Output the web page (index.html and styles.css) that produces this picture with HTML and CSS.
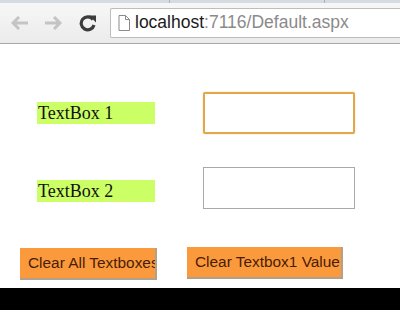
FILE: index.html
```html
<!DOCTYPE html>
<html lang="en">
<head>
  <meta charset="UTF-8">
  <title>Default.aspx</title>
  <link rel="stylesheet" href="styles.css">
</head>
<body>

  <div class="tabstrip">
    <span class="tab"></span>
    <span class="tab"></span>
  </div>

  <div class="toolbar">
    <svg class="nav-btn" width="18" height="14" viewBox="0 0 18 14">
      <path d="M8 1 L2 7 L8 13 M2 7 H17" fill="none" stroke="#c4c4c4" stroke-width="3"/>
    </svg>
    <svg class="nav-btn" width="18" height="14" viewBox="0 0 18 14">
      <path d="M10 1 L16 7 L10 13 M16 7 H1" fill="none" stroke="#c4c4c4" stroke-width="3"/>
    </svg>
    <svg class="reload" width="18" height="18" viewBox="0 0 18 18">
      <path d="M14 5.5 A6.5 6.5 0 1 0 15 11" fill="none" stroke="#3c3c3c" stroke-width="3.2"/>
      <path d="M10 1.5 L17 1.5 L17 8.5 Z" fill="#3c3c3c"/>
    </svg>
    <div class="address">
      <svg width="12" height="16" viewBox="0 0 12 16">
        <path d="M1 0.5 H7.5 L11.5 4.5 V15.5 H1 Z M7.5 0.5 V4.5 H11.5" fill="#fff" stroke="#8a8a8a" stroke-width="1"/>
      </svg>
      <span class="host">localhost</span><span class="path">:7116/Default.aspx</span>
    </div>
  </div>

  <div class="page">
    <div class="row">
      <span class="label">TextBox 1</span>
      <input type="text" class="box focused">
    </div>
    <div class="row second">
      <span class="label">TextBox 2</span>
      <input type="text" class="box">
    </div>
    <div class="buttons">
      <button class="btn btn-all">Clear All Textboxes</button>
      <button class="btn btn-one">Clear Textbox1 Value</button>
    </div>
  </div>

  <div class="bottom"></div>

</body>
</html>
```

FILE: styles.css
```css
* {
  box-sizing: border-box;
}

body {
  margin: 0;
  width: 400px;
  height: 310px;
  overflow: hidden;
  font-family: "Liberation Sans", Arial, sans-serif;
  background-color: #fff;
}

.tabstrip {
  height: 3px;
  background-color: #d6dbe1;
  display: flex;
}

.tabstrip .tab {
  width: 170px;
  border-right: 1px solid #a9b0b8;
}

.tabstrip .tab:nth-child(2) {
  width: 155px;
}

.toolbar {
  height: 41px;
  background: linear-gradient(#f7f7f7, #ebebeb);
  border-bottom: 1px solid #a8a8a8;
  display: flex;
  align-items: center;
  padding-left: 11px;
}

.nav-btn {
  margin-right: 15px;
}

.reload {
  margin-left: 2px;
  margin-right: 13px;
}

.address {
  flex: 1;
  height: 30px;
  margin-top: -1px;
  background-color: #fff;
  border: 1px solid #bdbdbd;
  border-right: none;
  border-radius: 2px 0 0 2px;
  display: flex;
  align-items: center;
  padding-left: 7px;
  font-size: 17.5px;
  white-space: nowrap;
}

.address svg {
  margin-right: 5px;
}

.host {
  color: #1a1a1a;
}

.path {
  color: #8a8a8a;
}

.page {
  height: 244px;
  padding-top: 48px;
}

.row {
  display: flex;
  align-items: center;
  height: 42px;
}

.row.second {
  margin-top: 33px;
}

.label {
  margin-left: 37px;
  width: 118px;
  height: 22px;
  line-height: 23px;
  background-color: #ccff66;
  font-family: "Liberation Serif", "Times New Roman", serif;
  font-size: 18px;
  color: #111;
  padding-left: 1px;
}

.row.second .label {
  margin-top: 5px;
}

.box {
  margin-left: 48px;
  width: 152px;
  height: 42px;
  border: 1px solid #a9a9a9;
  background-color: #fff;
}

.row.second .box {
  margin-top: -1px;
}

.box.focused {
  border: 2px solid #e5a54b;
  border-radius: 2px;
  box-shadow: 0 0 2px #f5d8a8;
}

.buttons {
  display: flex;
  align-items: flex-start;
  margin-top: 38px;
}

.btn {
  height: 32px;
  background-color: #fb9a3c;
  color: #4a1c06;
  border: none;
  border-right: 2px solid #b0a08c;
  border-bottom: 2px solid #b0a08c;
  font-family: "Liberation Sans", Arial, sans-serif;
  font-size: 15.4px;
  white-space: nowrap;
  overflow: hidden;
  text-align: left;
  padding: 0 0 0 8px;
}

.btn-all {
  margin-left: 20px;
  margin-top: 1px;
  width: 137px;
}

.btn-one {
  margin-left: 30px;
  width: 156px;
  padding-left: 8px;
}

.bottom {
  height: 22px;
  background-color: #000;
}
```
